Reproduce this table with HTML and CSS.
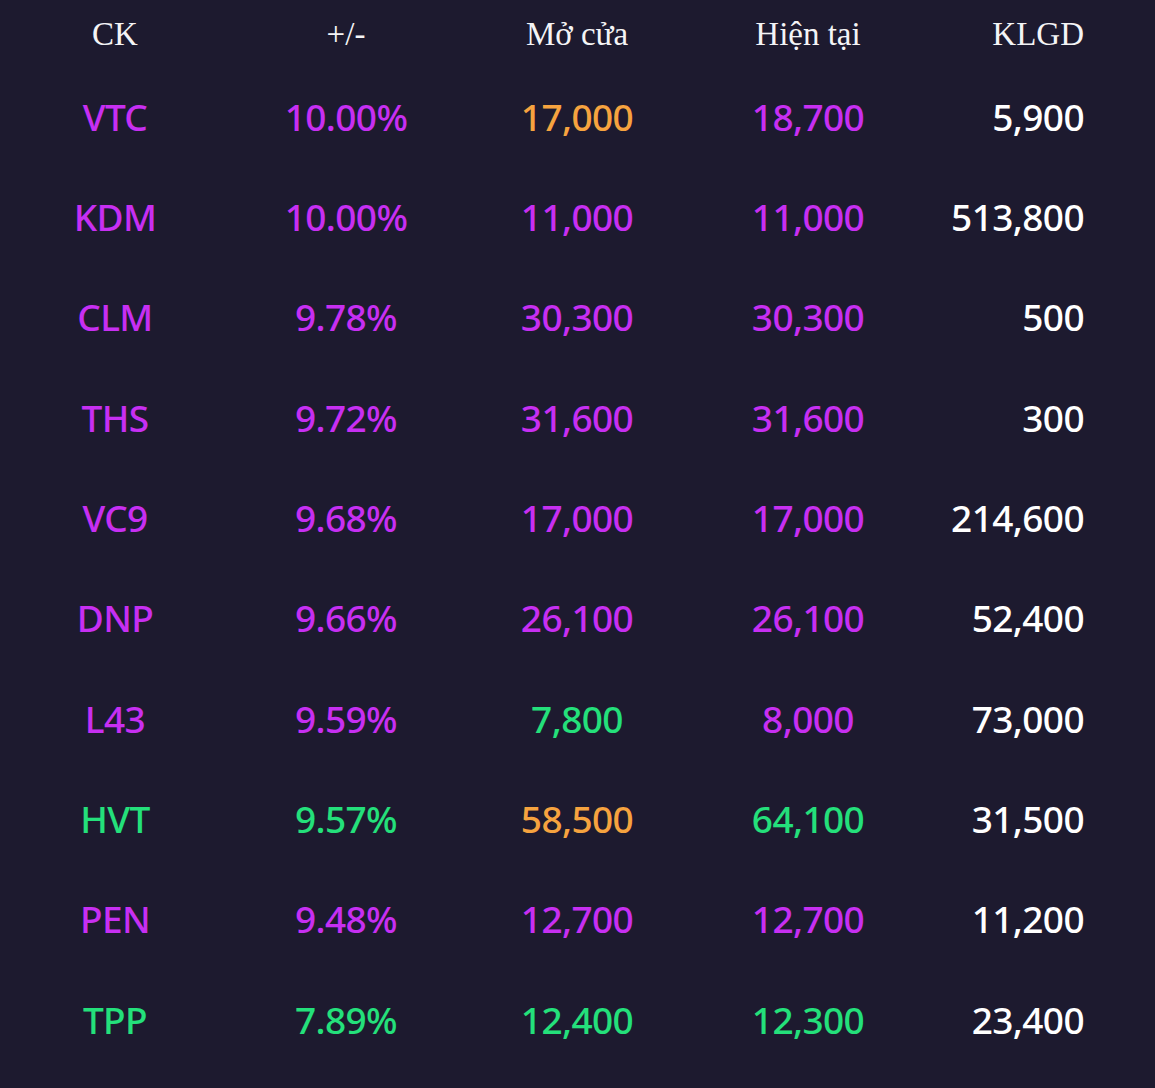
FILE: index.html
```html
<!DOCTYPE html>
<html lang="vi">
<head>
<meta charset="utf-8">
<title>Bảng giá</title>
<link rel="stylesheet" href="styles.css">
</head>
<body>
<div class="table">
  <div class="row head">
    <div class="cell">CK</div>
    <div class="cell">+/-</div>
    <div class="cell">Mở cửa</div>
    <div class="cell">Hiện tại</div>
    <div class="cell vol">KLGD</div>
  </div>
  <div class="row">
    <div class="cell up">VTC</div><div class="cell up">10.00%</div><div class="cell ref">17,000</div><div class="cell up">18,700</div><div class="cell vol">5,900</div>
  </div>
  <div class="row">
    <div class="cell up">KDM</div><div class="cell up">10.00%</div><div class="cell up">11,000</div><div class="cell up">11,000</div><div class="cell vol">513,800</div>
  </div>
  <div class="row">
    <div class="cell up">CLM</div><div class="cell up">9.78%</div><div class="cell up">30,300</div><div class="cell up">30,300</div><div class="cell vol">500</div>
  </div>
  <div class="row">
    <div class="cell up">THS</div><div class="cell up">9.72%</div><div class="cell up">31,600</div><div class="cell up">31,600</div><div class="cell vol">300</div>
  </div>
  <div class="row">
    <div class="cell up">VC9</div><div class="cell up">9.68%</div><div class="cell up">17,000</div><div class="cell up">17,000</div><div class="cell vol">214,600</div>
  </div>
  <div class="row">
    <div class="cell up">DNP</div><div class="cell up">9.66%</div><div class="cell up">26,100</div><div class="cell up">26,100</div><div class="cell vol">52,400</div>
  </div>
  <div class="row">
    <div class="cell up">L43</div><div class="cell up">9.59%</div><div class="cell green">7,800</div><div class="cell up">8,000</div><div class="cell vol">73,000</div>
  </div>
  <div class="row">
    <div class="cell green">HVT</div><div class="cell green">9.57%</div><div class="cell ref">58,500</div><div class="cell green">64,100</div><div class="cell vol">31,500</div>
  </div>
  <div class="row">
    <div class="cell up">PEN</div><div class="cell up">9.48%</div><div class="cell up">12,700</div><div class="cell up">12,700</div><div class="cell vol">11,200</div>
  </div>
  <div class="row">
    <div class="cell green">TPP</div><div class="cell green">7.89%</div><div class="cell green">12,400</div><div class="cell green">12,300</div><div class="cell vol">23,400</div>
  </div>
</div>
</body>
</html>
```

FILE: styles.css
```css
html, body {
  margin: 0;
  padding: 0;
  background: #1d1a2f;
}
body {
  width: 1155px;
  height: 1088px;
  overflow: hidden;
}
.table {
  display: flex;
  flex-direction: column;
}
.row {
  display: grid;
  grid-template-columns: repeat(5, 1fr);
  height: 100.33px;
  align-items: center;
  font-family: "Noto Sans", "Open Sans", sans-serif;
  font-size: 37px;
  font-weight: 500;
  letter-spacing: -0.6px;
  color: #ffffff;
}
.row .cell {
  padding-bottom: 4px;
}
.row.head {
  height: 68px;
  font-family: "Liberation Serif", "Times New Roman", serif;
  font-size: 33px;
  font-weight: 400;
  letter-spacing: 0;
  color: #f4f4f6;
}
.row.head .cell {
  padding-bottom: 0;
}
.cell {
  text-align: center;
  line-height: 1;
  padding-right: 1px;
}
.cell.vol {
  text-align: right;
  padding-right: 71px;
}
.up { color: #c72ff2; }
.ref { color: #f6a33f; }
.green { color: #24e07b; }
```
